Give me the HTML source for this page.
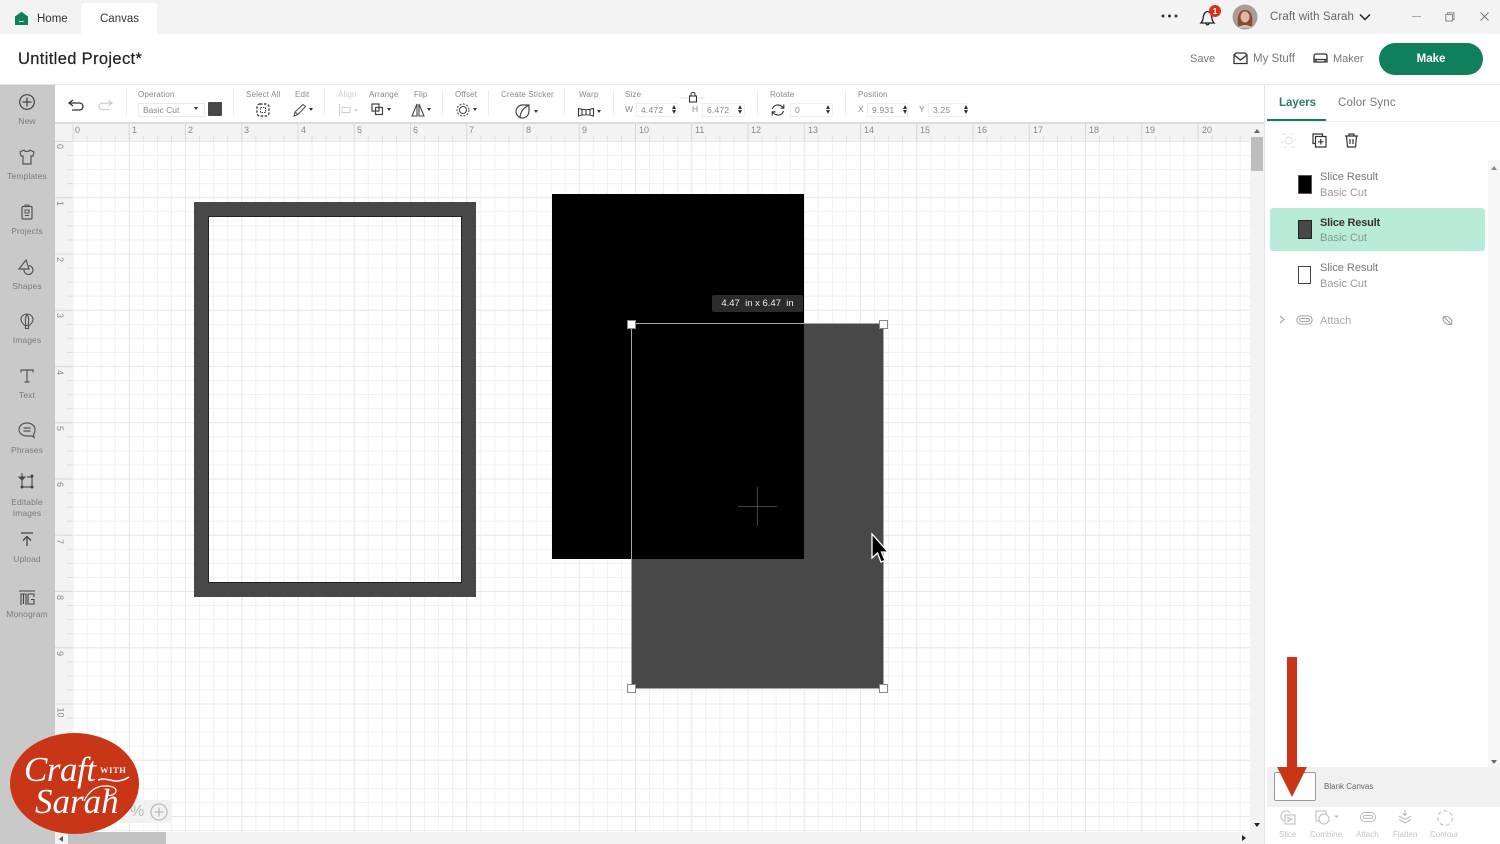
<!DOCTYPE html>
<html><head><meta charset="utf-8"><style>
html,body{margin:0;padding:0;width:1500px;height:844px;overflow:hidden;background:#fff}
#w{position:absolute;left:0;top:0;width:1500px;height:844px;overflow:hidden;background:#fff;font-family:"Liberation Sans",sans-serif;color:#444;filter:blur(.35px)}
.a,.t{position:absolute}
.t{white-space:nowrap;line-height:1}
svg{position:absolute;overflow:visible}
.ic{fill:none;stroke:#555;stroke-width:1.300}
.s{text-align:center;width:54px;left:0;font-size:8.500px;color:#7c7c7c;letter-spacing:.1px}
.l{font-size:8px;color:#888;top:91px;letter-spacing:.15px}
.f{position:absolute;top:103px;height:12px;border:1px solid #eee;font-size:8.500px;color:#888;line-height:12px;padding-left:4px;box-sizing:content-box;letter-spacing:.2px}
.sp{position:absolute;top:105px;width:5px;height:9px}
.sp:before,.sp:after{content:"";position:absolute;left:0;border-left:2.500px solid transparent;border-right:2.500px solid transparent}
.sp:before{top:0;border-bottom:4px solid #333}.sp:after{bottom:0;border-top:4px solid #333}
.div{position:absolute;top:90px;width:1px;height:26px;background:#ececec}
.ru{font-size:9px;color:#888}
</style></head><body><div id="w">

<!-- title bar -->
<div class="a" style="left:0;top:0;width:1500px;height:34px;background:#f3f3f3"></div>
<div class="a" style="left:81px;top:3px;width:76px;height:32px;background:#fff;border-radius:3px 3px 0 0"></div>
<svg style="left:14px;top:11px" width="15" height="15" viewBox="0 0 15 15"><path d="M1 5.500 7.500 .8 14 5.500V14H1z" fill="#0f7f5c"/><path d="M5 10.500h4.500" stroke="#fff" stroke-width="1"/></svg>
<div class="t" style="left:37px;top:14px;font-size:11.500px;color:#333">Home</div>
<div class="t" style="left:100px;top:14px;font-size:11.500px;color:#333">Canvas</div>
<svg style="left:1161px;top:14px" width="18" height="4"><circle cx="2" cy="2" r="1.500" fill="#333"/><circle cx="8.500" cy="2" r="1.500" fill="#333"/><circle cx="15" cy="2" r="1.500" fill="#333"/></svg>
<svg style="left:1199px;top:8px" width="18" height="18" viewBox="0 0 18 18"><path d="M2 15c2-2 2-4 2.500-7C5 5 7 3.500 8.500 3.500S12 5 12.500 8c.5 3 .5 5 2.500 7zM7 15.500c.5 1.800 2.500 1.800 3 0" class="ic" style="stroke:#222"/></svg>
<div class="a" style="left:1209px;top:5px;width:12px;height:12px;border-radius:50%;background:#d8301f;color:#fff;font-size:8.500px;font-weight:bold;text-align:center;line-height:12px">1</div>
<svg style="left:1232px;top:4px" width="26" height="26" viewBox="0 0 26 26"><circle cx="13" cy="13" r="12.500" fill="#a99d95"/><path d="M6 22c-1-8 0-16 7-16s8 8 7 16z" fill="#8b4a34"/><ellipse cx="13" cy="13" rx="4.500" ry="5.500" fill="#e2b8a0"/><path d="M7 24c1-4 11-4 12 0z" fill="#c9c0b8"/></svg>
<div class="t" style="left:1270px;top:12px;font-size:11.500px;color:#666;letter-spacing:.1px">Craft with Sarah</div>
<svg style="left:1359px;top:13px" width="12" height="9"><path d="M1 1.500 6 6.500 11 1.500" fill="none" stroke="#222" stroke-width="1.500"/></svg>
<div class="a" style="left:1412px;top:16px;width:9px;height:1px;background:#aaa"></div>
<svg style="left:1445px;top:12px" width="10" height="10"><path d="M2.500 2.500V.8H9V7.500H7.500M.8 2.500H7.500V9H.8z" fill="none" stroke="#888" stroke-width="1"/></svg>
<svg style="left:1480px;top:12px" width="9" height="9"><path d="M.5.500 8.500 8.500M8.500.5.500 8.500" stroke="#777" stroke-width="1"/></svg>

<!-- project bar -->
<div class="t" style="left:18px;top:51px;font-size:16.500px;color:#222;letter-spacing:.35px;-webkit-text-stroke:.2px #222">Untitled Project*</div>
<div class="t" style="left:1190px;top:54px;font-size:11px;color:#777">Save</div>
<svg style="left:1233px;top:52px" width="15" height="13" viewBox="0 0 15 13"><path d="M1 3 3 1H12L14 3V11.500H1zM1 3 7.500 8 14 3" class="ic" style="stroke:#333"/></svg>
<div class="t" style="left:1253px;top:54px;font-size:11.500px;color:#777">My Stuff</div>
<svg style="left:1313px;top:53px" width="15" height="11" viewBox="0 0 15 11"><path d="M1 3C1 1.500 2 1 3 1H12C13 1 14 1.500 14 3V9H1zM1 6.500H14M3 6.500V9M12 6.500V9" class="ic" style="stroke:#333"/></svg>
<div class="t" style="left:1333px;top:54px;font-size:11px;color:#777">Maker</div>
<div class="a" style="left:1379px;top:43px;width:104px;height:32px;border-radius:16px;background:#0f7f5c;color:#fff;font-size:11.500px;font-weight:bold;text-align:center;line-height:32px">Make</div>
<div class="a" style="left:0;top:84px;width:1500px;height:1px;background:#e5e5e5"></div>

<!-- toolbar -->
<div class="a" style="left:55px;top:85px;width:1209px;height:38px;background:#fff"></div>
<div class="a" style="left:55px;top:122px;width:1209px;height:2px;background:#dcdcdc"></div>
<svg style="left:68px;top:99px" width="16" height="12" viewBox="0 0 16 12"><path d="M5 1 1 4 5 7M1 4H11C14 4 15 6 15 7.500S14 11 11 11H4" class="ic" style="stroke:#333"/></svg>
<svg style="left:98px;top:99px" width="15" height="12" viewBox="0 0 16 12"><path d="M11 1 15 4 11 7M15 4H5C2 4 1 6 1 7.500S2 11 5 11H12" class="ic" style="stroke:#ccc"/></svg>
<div class="div" style="left:126px"></div>
<div class="t l" style="left:138px">Operation</div>
<div class="a" style="left:138px;top:103px;width:65px;height:12px;border:1px solid #eaeaea;font-size:8.500px;color:#888;line-height:12px;text-indent:4px">Basic Cut</div>
<div class="a" style="left:194px;top:107px;border-left:2.500px solid transparent;border-right:2.500px solid transparent;border-top:3.500px solid #333"></div>
<div class="a" style="left:208px;top:102px;width:14px;height:14px;background:#484848;border-radius:1px"></div>
<div class="div" style="left:233px"></div>
<div class="t l" style="left:246px">Select All</div>
<svg style="left:256px;top:103px" width="14" height="14"><rect x="1" y="1" width="12" height="12" rx="3" fill="none" stroke="#444" stroke-width="1.400" stroke-dasharray="2.500 1.500"/><rect x="4.500" y="4.500" width="5" height="5" fill="none" stroke="#444" stroke-dasharray="1.500 1"/></svg>
<div class="t l" style="left:295px">Edit</div>
<svg style="left:293px;top:103px" width="14" height="14" viewBox="0 0 14 14"><path d="M1 13 2 9 10 1.500 12.500 3.500 5 11.500zM2 9 5 11.500" class="ic" style="stroke-width:1.100"/></svg>
<div class="a" style="left:309px;top:108px;border-left:2.500px solid transparent;border-right:2.500px solid transparent;border-top:3.500px solid #333"></div>
<div class="div" style="left:324px"></div>
<div class="t l" style="left:338px;color:#ccc">Align</div>
<svg style="left:339px;top:104px" width="20" height="12"><path d="M.5 0V12M3 3.500H11V8.500H3z" fill="none" stroke="#ccc"/><path d="M15 5H19L17 7.500z" fill="#ccc"/></svg>
<div class="t l" style="left:369px">Arrange</div>
<svg style="left:371px;top:103px" width="13" height="13"><path d="M1 1H8V8H1zM4.500 4.500H11.500V11.500H4.500z" fill="none" stroke="#444" stroke-width="1.200"/></svg>
<div class="a" style="left:387px;top:108px;border-left:2.500px solid transparent;border-right:2.500px solid transparent;border-top:3.500px solid #333"></div>
<div class="t l" style="left:414px">Flip</div>
<svg style="left:411px;top:103px" width="14" height="14"><path d="M6 1 1 13H6zM8 1 13 13H8z" fill="none" stroke="#444" stroke-width="1.100"/></svg>
<div class="a" style="left:427px;top:108px;border-left:2.500px solid transparent;border-right:2.500px solid transparent;border-top:3.500px solid #333"></div>
<div class="div" style="left:442px"></div>
<div class="t l" style="left:455px">Offset</div>
<svg style="left:456px;top:103px" width="14" height="14"><circle cx="7" cy="7" r="3.500" fill="none" stroke="#444"/><circle cx="7" cy="7" r="6" fill="none" stroke="#444" stroke-dasharray="2 1.500"/></svg>
<div class="a" style="left:473px;top:108px;border-left:2.500px solid transparent;border-right:2.500px solid transparent;border-top:3.500px solid #333"></div>
<div class="div" style="left:488px"></div>
<div class="t l" style="left:501px">Create Sticker</div>
<svg style="left:515px;top:104px" width="15" height="15" viewBox="0 0 15 15"><path d="M14 7C14 11 11 14 7.500 14S1 11 1 7.500 4 1 7.500 1H14zM14 1C11 3 6 5 5 13" class="ic" style="stroke-width:1.200;stroke:#444"/></svg>
<div class="a" style="left:534px;top:110px;border-left:2.500px solid transparent;border-right:2.500px solid transparent;border-top:3.500px solid #333"></div>
<div class="div" style="left:564px"></div>
<div class="t l" style="left:579px">Warp</div>
<svg style="left:578px;top:107px" width="16" height="10"><path d="M.5 1.500C5 3 11 3 15.500 1.500V9C11 7.500 5 7.500 .5 9zM4 2.500V8M8 2.800V8M12 2.500V8" fill="none" stroke="#333" stroke-width="1.100"/></svg>
<div class="a" style="left:597px;top:110px;border-left:2.500px solid transparent;border-right:2.500px solid transparent;border-top:3.500px solid #333"></div>
<div class="div" style="left:613px"></div>
<div class="t l" style="left:625px">Size</div>
<svg style="left:681px;top:91px" width="24" height="12"><path d="M1 8V7H7M17 7H23V8" fill="none" stroke="#ddd"/><rect x="8.500" y="5" width="7" height="6" fill="none" stroke="#333" stroke-width="1.100"/><path d="M10 5V3C10 1 14 1 14 3V5" fill="none" stroke="#333"/></svg>
<div class="t" style="left:625px;top:105px;font-size:8.500px;color:#888">W</div>
<div class="f" style="left:636px;width:36px;top:103px">4.472</div><div class="sp" style="left:672px"></div>
<div class="t" style="left:692px;top:105px;font-size:8.500px;color:#888">H</div>
<div class="f" style="left:702px;width:37px">6.472</div><div class="sp" style="left:738px"></div>
<div class="div" style="left:757px"></div>
<div class="t l" style="left:770px">Rotate</div>
<svg style="left:771px;top:103px" width="14" height="14" viewBox="0 0 14 14"><path d="M1.500 6C2.500 2 7.500 .5 11 3.500L12.500 5M12.500 8C11.500 12 6.500 13.500 3 10.500L1.500 9M12.800 1.500V5.200H9.500M1.200 12.500V8.800H4.500" class="ic" style="stroke-width:1.100;stroke:#333"/></svg>
<div class="f" style="left:790px;width:37px">0</div><div class="sp" style="left:826px"></div>
<div class="div" style="left:845px"></div>
<div class="t l" style="left:858px">Position</div>
<div class="t" style="left:858px;top:105px;font-size:8.500px;color:#888">X</div>
<div class="f" style="left:867px;width:35px">9.931</div><div class="sp" style="left:903px"></div>
<div class="t" style="left:919px;top:105px;font-size:8.500px;color:#888">Y</div>
<div class="f" style="left:928px;width:33px">3.25</div><div class="sp" style="left:964px"></div>

<!-- left rail -->
<div class="a" style="left:0;top:85px;width:55px;height:759px;background:#c9c9c9"></div>
<svg style="left:19px;top:94px" width="16" height="16"><circle cx="8" cy="8" r="7.300" fill="none" stroke="#444" stroke-width="1.200"/><path d="M8 3.500V12.500M3.500 8H12.500" stroke="#444" stroke-width="1.200"/></svg>
<div class="t s" style="top:117px">New</div>
<svg style="left:19px;top:149px" width="16" height="16" viewBox="0 0 16 16"><path d="M5 1 1 3 2 7H4V15H12V7H14L15 3 11 1C10 3 6 3 5 1z" class="ic" style="stroke-width:1.200"/></svg>
<div class="t s" style="top:172px">Templates</div>
<svg style="left:21px;top:204px" width="12" height="16" viewBox="0 0 12 16"><rect x="1" y="2.500" width="10" height="12.500" rx="1" class="ic" style="stroke-width:1.200"/><path d="M4 2.500V1H8V2.500M4 6H8V9H4zM4 11.500H8" class="ic" style="stroke-width:1"/></svg>
<div class="t s" style="top:227px">Projects</div>
<svg style="left:18px;top:259px" width="18" height="16" viewBox="0 0 18 16"><path d="M8 1 1 10H11zM6 10.500A4.500 4.500 0 1 0 11 6.500" class="ic" style="stroke-width:1.200"/></svg>
<div class="t s" style="top:282px">Shapes</div>
<svg style="left:20px;top:313px" width="14" height="17" viewBox="0 0 14 17"><path d="M7 1C3.500 1 1 3.500 1 6.500 1 9 3.500 11.500 5 12.500H9C10.500 11.500 13 9 13 6.500 13 3.500 10.500 1 7 1zM5.500 12.500V15.500H8.500V12.500M7 1C5 4 5 9 6 12.500M7 1C9 4 9 9 8 12.500" class="ic" style="stroke-width:1.100"/></svg>
<div class="t s" style="top:336px">Images</div>
<svg style="left:20px;top:369px" width="14" height="14"><path d="M1 3.500V1H13V3.500M7 1V13M4.500 13H9.500" fill="none" stroke="#555" stroke-width="1.200"/></svg>
<div class="t s" style="top:391px">Text</div>
<svg style="left:18px;top:422px" width="18" height="17" viewBox="0 0 18 17"><path d="M9 1C4.500 1 1 3.800 1 7.500S4.500 14 9 14H14L16 15.500 15.500 12.500C16.500 11 17 9.500 17 7.500 17 3.800 13.500 1 9 1zM5.500 6H12.500M5.500 9H12.500" class="ic" style="stroke-width:1.200"/></svg>
<div class="t s" style="top:446px">Phrases</div>
<svg style="left:19px;top:472px" width="16" height="17" viewBox="0 0 16 17"><path d="M3 7V15H13V5H8" class="ic" style="stroke-width:1.200"/><path d="M3 1V7M0 5H6L3 8z" stroke="#444" fill="#444"/><circle cx="13" cy="4" r="1.500" fill="#444"/><circle cx="3" cy="15" r="1.500" fill="#444"/><circle cx="13" cy="15" r="1.500" fill="#444"/></svg>
<div class="t s" style="top:498px">Editable</div>
<div class="t s" style="top:509px">Images</div>
<svg style="left:20px;top:532px" width="14" height="15"><path d="M1 1H13M7 14V5M3 8.500 7 4.500 11 8.500" fill="none" stroke="#444" stroke-width="1.300"/></svg>
<div class="t s" style="top:555px">Upload</div>
<svg style="left:18px;top:590px" width="18" height="16" viewBox="0 0 18 16"><path d="M1 1H17M3 15V4H8V15M5.500 4V14M10 4H16V7M10 4V14H16V9.500H13" fill="none" stroke="#444" stroke-width="1.100"/></svg>
<div class="t s" style="top:610px">Monogram</div>

<!-- canvas -->
<svg style="left:55px;top:124px" width="1195" height="708" viewBox="0 0 1195 708">
<defs>
<pattern id="m" x="17.500" y="17" width="14.0625" height="14.0625" patternUnits="userSpaceOnUse"><path d="M.5 0V14.100M0 .5H14.100" fill="none" stroke="#f0f0f0" stroke-width="1"/></pattern>
<pattern id="M" x="17.500" y="17" width="56.25" height="56.25" patternUnits="userSpaceOnUse"><path d="M.5 0V56.300M0 .5H56.300" fill="none" stroke="#e8e8e8" stroke-width="1"/></pattern>
<pattern id="tx" x="17.500" y="0" width="14.0625" height="17" patternUnits="userSpaceOnUse"><path d="M.5 12V17" stroke="#ddd" fill="none"/></pattern>
<pattern id="Tx" x="17.500" y="0" width="56.25" height="17" patternUnits="userSpaceOnUse"><path d="M.5 0V17" stroke="#d8d8d8" fill="none"/></pattern>
<pattern id="ty" x="0" y="17" width="17" height="14.0625" patternUnits="userSpaceOnUse"><path d="M12 .5H17" stroke="#ddd" fill="none"/></pattern>
<pattern id="Ty" x="0" y="17" width="17" height="56.25" patternUnits="userSpaceOnUse"><path d="M0 .5H17" stroke="#d8d8d8" fill="none"/></pattern>
</defs>
<rect width="1195" height="708" fill="#fff"/>
<rect width="1195" height="708" fill="url(#m)"/>
<rect width="1195" height="708" fill="url(#M)"/>
<rect width="1195" height="17" fill="#f3f3f3"/>
<rect width="17" height="708" fill="#f3f3f3"/>
<rect x="17" width="1178" height="17" fill="url(#tx)"/>
<rect x="17" width="1178" height="17" fill="url(#Tx)"/>
<rect y="17" width="17" height="691" fill="url(#ty)"/>
<rect y="17" width="17" height="691" fill="url(#Ty)"/>
</svg>
<!-- ruler labels -->
<div class="t ru" style="left:75px;top:126px">0</div><div class="t ru" style="left:132px;top:126px">1</div><div class="t ru" style="left:188px;top:126px">2</div><div class="t ru" style="left:244px;top:126px">3</div><div class="t ru" style="left:301px;top:126px">4</div><div class="t ru" style="left:357px;top:126px">5</div><div class="t ru" style="left:413px;top:126px">6</div><div class="t ru" style="left:469px;top:126px">7</div><div class="t ru" style="left:526px;top:126px">8</div><div class="t ru" style="left:582px;top:126px">9</div><div class="t ru" style="left:639px;top:126px">10</div><div class="t ru" style="left:695px;top:126px">11</div><div class="t ru" style="left:751px;top:126px">12</div><div class="t ru" style="left:808px;top:126px">13</div><div class="t ru" style="left:864px;top:126px">14</div><div class="t ru" style="left:920px;top:126px">15</div><div class="t ru" style="left:977px;top:126px">16</div><div class="t ru" style="left:1033px;top:126px">17</div><div class="t ru" style="left:1089px;top:126px">18</div><div class="t ru" style="left:1145px;top:126px">19</div><div class="t ru" style="left:1202px;top:126px">20</div>
<div class="t ru" style="left:57px;top:142px;transform:rotate(90deg)">0</div><div class="t ru" style="left:57px;top:199px;transform:rotate(90deg)">1</div><div class="t ru" style="left:57px;top:255px;transform:rotate(90deg)">2</div><div class="t ru" style="left:57px;top:311px;transform:rotate(90deg)">3</div><div class="t ru" style="left:57px;top:368px;transform:rotate(90deg)">4</div><div class="t ru" style="left:57px;top:424px;transform:rotate(90deg)">5</div><div class="t ru" style="left:57px;top:480px;transform:rotate(90deg)">6</div><div class="t ru" style="left:57px;top:537px;transform:rotate(90deg)">7</div><div class="t ru" style="left:57px;top:593px;transform:rotate(90deg)">8</div><div class="t ru" style="left:57px;top:649px;transform:rotate(90deg)">9</div><div class="t ru" style="left:55px;top:708px;transform:rotate(90deg)">10</div>

<!-- shapes -->
<div class="a" style="left:194px;top:202px;width:282px;height:395px;box-sizing:border-box;border:15px solid #484848"></div>
<div class="a" style="left:208px;top:216px;width:254px;height:367px;box-sizing:border-box;border:1.500px solid #222"></div>
<div class="a" style="left:551.500px;top:194px;width:252.500px;height:365px;background:#000"></div>
<div class="a" style="left:632px;top:559px;width:251px;height:129px;background:#484848"></div>
<div class="a" style="left:804px;top:324px;width:79px;height:235px;background:#484848"></div>
<div class="a" style="left:631px;top:323px;width:253px;height:366px;box-sizing:border-box;border:1px solid #a8a8a8"></div>
<div class="a" style="left:627px;top:319.500px;width:7px;height:7px;background:#fff;border:1px solid #888"></div>
<div class="a" style="left:879px;top:319.500px;width:7px;height:7px;background:#fff;border:1px solid #888"></div>
<div class="a" style="left:627px;top:684px;width:7px;height:7px;background:#fff;border:1px solid #888"></div>
<div class="a" style="left:879px;top:684px;width:7px;height:7px;background:#fff;border:1px solid #888"></div>
<div class="a" style="left:712px;top:295px;width:91px;height:17px;background:#2b2b2b;border-radius:2px;color:#eee;font-size:9.500px;text-align:center;line-height:17px;white-space:pre">4.47  in x 6.47  in</div>
<div class="a" style="left:738px;top:506px;width:39px;height:1px;background:#444"></div>
<div class="a" style="left:757px;top:487px;width:1px;height:39px;background:#444"></div>
<svg style="left:870px;top:533px" width="20" height="32" viewBox="0 0 20 32"><path d="M2 1V25L7.500 20 11 29 15 27.500 11.500 19H18z" fill="#000" stroke="#fff" stroke-width="1.300"/></svg>

<!-- zoom ctrl -->
<div class="a" style="left:118px;top:800px;width:54px;height:23px;background:#f1f1f1;border-radius:4px"></div>
<div class="t" style="left:130px;top:804px;font-size:16px;color:#bbb">%</div>
<svg style="left:150px;top:803px" width="18" height="18"><circle cx="9" cy="9" r="8" fill="none" stroke="#bbb" stroke-width="1.300"/><path d="M9 4.500V13.500M4.500 9H13.500" stroke="#bbb" stroke-width="1.300"/></svg>

<!-- scrollbars -->
<div class="a" style="left:1250px;top:124px;width:14px;height:720px;background:#f3f3f3"></div>
<div class="a" style="left:1251px;top:137px;width:12px;height:34px;background:#bdbdbd"></div>
<div class="a" style="left:1254px;top:129px;border-left:3px solid transparent;border-right:3px solid transparent;border-bottom:4px solid #666"></div>
<div class="a" style="left:1254px;top:823px;border-left:3px solid transparent;border-right:3px solid transparent;border-top:4px solid #222"></div>
<div class="a" style="left:55px;top:832px;width:1195px;height:12px;background:#f3f3f3"></div>
<div class="a" style="left:68px;top:832px;width:98px;height:12px;background:#c2c2c2"></div>
<div class="a" style="left:59px;top:836px;border-top:3px solid transparent;border-bottom:3px solid transparent;border-right:4px solid #555"></div>
<div class="a" style="left:1242px;top:835px;border-top:3px solid transparent;border-bottom:3px solid transparent;border-left:4px solid #222"></div>

<!-- right panel -->
<div class="a" style="left:1264px;top:85px;width:236px;height:759px;background:#fff;border-left:1px solid #e5e5e5;box-sizing:border-box"></div>
<div class="t" style="left:1279px;top:98px;font-size:11.500px;font-weight:bold;color:#2a7d60">Layers</div>
<div class="t" style="left:1338px;top:98px;font-size:11.500px;color:#777;letter-spacing:.15px">Color Sync</div>
<div class="a" style="left:1267px;top:119px;width:59px;height:2px;background:#0f7f5c"></div>
<div class="a" style="left:1265px;top:121px;width:235px;height:1px;background:#eee"></div>
<svg style="left:1281px;top:133px" width="15" height="15"><rect x="1" y="1" width="13" height="13" rx="1" fill="none" stroke="#e4e4e4" stroke-dasharray="3 5"/><circle cx="7.500" cy="7.500" r="3.500" fill="none" stroke="#ddd"/></svg>
<svg style="left:1312px;top:133px" width="15" height="15" viewBox="0 0 15 15"><path d="M3.500 10.500H1V1H10.500V3.500M3.500 3.500H14V14H3.500zM8.800 6V11.500M6 8.800H11.500" class="ic" style="stroke:#333;stroke-width:1.200"/></svg>
<svg style="left:1344px;top:133px" width="15" height="15" viewBox="0 0 15 15"><path d="M1 3H14M5 3V1H10V3M2.500 3 3.500 14H11.500L12.500 3M6 6V11M9 6V11" class="ic" style="stroke:#333;stroke-width:1.200"/></svg>

<div class="a" style="left:1298px;top:175px;width:12px;height:17px;background:#000;border:.5px solid #555"></div>
<div class="t" style="left:1320px;top:172px;font-size:11px;color:#777">Slice Result</div>
<div class="t" style="left:1320px;top:188px;font-size:11px;color:#999">Basic Cut</div>

<div class="a" style="left:1270px;top:208px;width:215px;height:43px;background:#b8ecd9;border-radius:3px"></div>
<div class="a" style="left:1298px;top:220px;width:12px;height:17px;background:#484848;border:.5px solid #222"></div>
<div class="t" style="left:1320px;top:218px;font-size:11px;color:#333;font-weight:bold;letter-spacing:-.2px">Slice Result</div>
<div class="t" style="left:1320px;top:233px;font-size:11px;color:#7f9c92">Basic Cut</div>

<div class="a" style="left:1298px;top:266px;width:13px;height:18px;box-sizing:border-box;background:#fff;border:1.500px solid #444"></div>
<div class="t" style="left:1320px;top:263px;font-size:11px;color:#777">Slice Result</div>
<div class="t" style="left:1320px;top:279px;font-size:11px;color:#999">Basic Cut</div>

<svg style="left:1279px;top:315px" width="6" height="9"><path d="M1 1 5 4.500 1 8" fill="none" stroke="#999"/></svg>
<svg style="left:1296px;top:315px" width="17" height="10" viewBox="0 0 17 10"><rect x=".8" y=".8" width="15.400" height="8.400" rx="4.200" fill="none" stroke="#aaa" stroke-width="1.100"/><rect x="3.500" y="3.500" width="10" height="3" rx="1.500" fill="none" stroke="#aaa"/></svg>
<div class="t" style="left:1320px;top:316px;font-size:11px;color:#aaa">Attach</div>
<svg style="left:1442px;top:315px" width="11" height="11"><ellipse cx="5.500" cy="5.500" rx="5" ry="3.300" fill="none" stroke="#999" transform="rotate(35 5.500 5.500)"/><path d="M1 1 10 10" stroke="#999"/></svg>

<!-- panel scroll -->
<div class="a" style="left:1488px;top:160px;width:12px;height:607px;background:#f6f6f6"></div>
<div class="a" style="left:1491px;top:166px;border-left:3px solid transparent;border-right:3px solid transparent;border-bottom:4px solid #888"></div>
<div class="a" style="left:1491px;top:760px;border-left:3px solid transparent;border-right:3px solid transparent;border-top:4px solid #666"></div>

<!-- blank canvas row -->
<div class="a" style="left:1267px;top:767px;width:233px;height:40px;background:#f1f1f1"></div>
<div class="a" style="left:1274px;top:772px;width:42px;height:29px;box-sizing:border-box;background:#fff;border:1px solid #999;border-radius:2px"></div>
<div class="t" style="left:1324px;top:783px;font-size:8px;color:#666">Blank Canvas</div>

<!-- bottom tools -->
<svg style="left:1280px;top:810px" width="16" height="15" viewBox="0 0 16 15"><path d="M4 11C1 10 0 6 2 3S8 0 10 3M5 5H15V14H5zM8 7.500 11.500 9.500 8 11.500z" fill="none" stroke="#bbb"/></svg>
<svg style="left:1315px;top:810px" width="24" height="15"><rect x="1" y="1" width="10" height="10" fill="none" stroke="#bbb"/><circle cx="9" cy="9" r="5" fill="#fff" stroke="#bbb"/><path d="M19 5.500H24L21.500 8z" fill="#bbb"/></svg>
<svg style="left:1360px;top:812px" width="16" height="10"><rect x=".5" y=".5" width="15" height="9" rx="4.500" fill="none" stroke="#bbb"/><rect x="3.500" y="3.500" width="9" height="3" rx="1.500" fill="none" stroke="#bbb"/></svg>
<svg style="left:1398px;top:810px" width="14" height="16"><path d="M7 0V5M5 3.500 7 5.500 9 3.500M1 6 7 9.500 13 6M1 9.500 7 13 13 9.500" fill="none" stroke="#bbb" stroke-width="1.100"/></svg>
<svg style="left:1437px;top:810px" width="16" height="16"><circle cx="8" cy="8" r="7.300" fill="none" stroke="#bbb" stroke-dasharray="4 2.500"/></svg>
<div class="t" style="left:1279px;top:831px;font-size:8px;color:#c4c4c4">Slice</div>
<div class="t" style="left:1310px;top:831px;font-size:8px;color:#c4c4c4">Combine</div>
<div class="t" style="left:1356px;top:831px;font-size:8px;color:#c4c4c4">Attach</div>
<div class="t" style="left:1393px;top:831px;font-size:8px;color:#c4c4c4">Flatten</div>
<div class="t" style="left:1430px;top:831px;font-size:8px;color:#c4c4c4">Contour</div>

<!-- red arrow -->
<svg style="left:1277px;top:657px" width="30" height="140"><path d="M10 0H20V110H30L15 140 0 110H10z" fill="#c93517"/></svg>

<!-- logo -->
<div class="a" style="left:10px;top:733px;width:129px;height:101px;border-radius:50%;background:#c93517"></div>
<div class="t" style="left:24px;top:752px;font-family:'Liberation Serif',serif;font-style:italic;font-size:35px;color:#fff;letter-spacing:-.5px">Craft</div>
<div class="t" style="left:100px;top:766px;font-family:'Liberation Serif',serif;font-size:8.500px;font-weight:bold;color:#fff;letter-spacing:.6px">WITH</div>
<svg style="left:98px;top:776px" width="32" height="8"><path d="M0 4C8 1 14 6 20 5S28 3 31 1" fill="none" stroke="#fff" stroke-width="1.500"/></svg>
<div class="t" style="left:35px;top:784px;font-family:'Liberation Serif',serif;font-style:italic;font-size:35px;color:#fff">Sarah</div>
<svg style="left:80px;top:783px" width="44" height="20"><path d="M4 18C10 6 18 2 28 3S38 10 32 12 26 9 29 7" fill="none" stroke="#fff" stroke-width="1.200"/></svg>

</div></body></html>
